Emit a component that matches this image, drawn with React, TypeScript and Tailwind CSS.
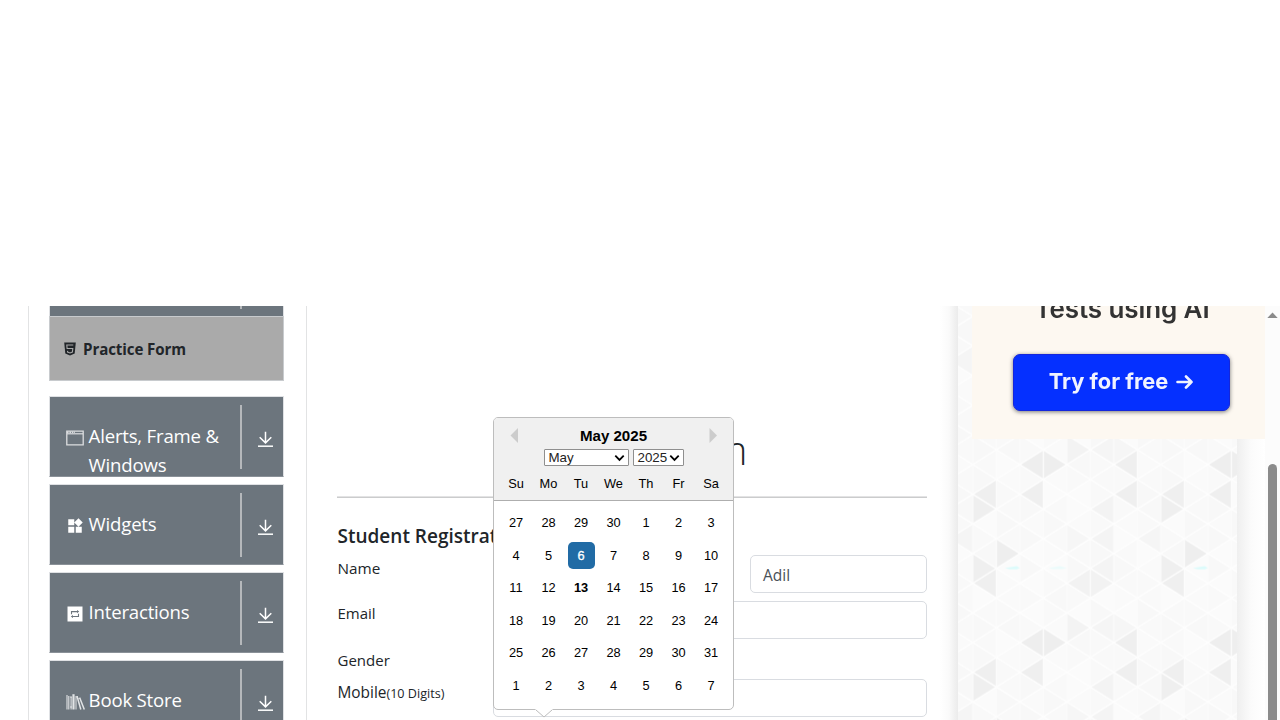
import type { ReactNode } from "react";
import { MdWidgets } from "react-icons/md";

const sans = "font-['Open_Sans','Noto_Sans',sans-serif]";
const arial = "font-['Liberation_Sans',Arial,sans-serif]";

const COL = 23.5;
const HALF = 178 / 12;

const shades: Record<string, string> = {
  "2L0": "#eeeeee", "3R0": "#eeeeee", "6L0": "#efefef",
  "0L2": "#efefef", "0R3": "#efefef", "2L2": "#efefef", "6L2": "#efefef",
  "5L3": "#f3f3f3", "4R11": "#f3f3f3", "5L11": "#f5f5f5", "6R11": "#f6f6f6",
  "4R5": "#f6f6f6", "5L5": "#f4f4f4", "7L5": "#f5f5f5",
  "1R6": "#eeeeee", "0R7": "#efefef", "0L8": "#efefef",
  "4L8": "#f2f2f2", "5R8": "#f2f2f2", "5L7": "#f4f4f4",
};
const tints = ["#f9f9f9", "#fafafa", "#f8f8f8", "#fbfbfb", "#f9f9f9"];

function Triangles() {
  const items: ReactNode[] = [];
  for (let c = 0; c < 8; c++) {
    for (let v = -1; v <= 13; v++) {
      const row = (v + 12) % 12;
      const pointsLeft = (c + v + 12) % 2 === 0;
      const y = v * HALF;
      const apexX = pointsLeft ? c * COL : (c + 1) * COL;
      const baseX = pointsLeft ? (c + 1) * COL : c * COL;
      const fill = shades[`${c}${pointsLeft ? "L" : "R"}${row}`] ?? tints[(c * 3 + row * 2 + ((c * row) % 3)) % 5];
      items.push(
        <polygon
          key={`${c}-${v}`}
          points={`${apexX},${y} ${baseX},${y - HALF} ${baseX},${y + HALF}`}
          fill={fill}
        />,
      );
    }
  }
  for (let c = 0; c <= 8; c++) {
    items.push(<path key={`line-${c}`} d={`M${c * COL} 0V178`} stroke="#fcfcfc" strokeWidth="1.3" />);
  }
  for (let v = -8; v <= 20; v += 2) {
    items.push(
      <path
        key={`diagonal-${v}`}
        d={`M0 ${v * HALF}L188 ${(v + 8) * HALF}M0 ${v * HALF}L188 ${(v - 8) * HALF}`}
        stroke="#fefefe"
        strokeWidth="1.3"
      />,
    );
  }
  return (
    <svg className="block h-[414px] w-[279px]" viewBox="0 0 279 414">
      <defs>
        <pattern id="tri" width="188" height="178" patternUnits="userSpaceOnUse" patternTransform="translate(14.8 158.6)">
          {items}
          <path d="M32 103.5l12-2 3 2-3 1.2h-7z" fill="#dcfbfb" />
          <path d="M76 103.5l11-2 7 2-5 1h-9z" fill="#ebfbfb" />
        </pattern>
      </defs>
      <rect width="279" height="414" fill="url(#tri)" />
    </svg>
  );
}

const BrowserIcon = () => (
  <svg width="18" height="18" viewBox="0 0 18 18" fill="none" stroke="#dcdee0">
    <path d="M.8 2.2h16.4v13.6H.8z" strokeWidth="1.3" />
    <path d="M1 4.8h16" strokeWidth="1.2" />
    <path d="M1 3.3h8" strokeWidth="1.4" strokeDasharray="1.6 .8" />
  </svg>
);

const RepeatIcon = () => (
  <svg width="18" height="18" viewBox="0 0 18 18" fill="none">
    <path fill="#fff" d="M1.5 1.5h15v15h-15z" />
    <path d="M5.5 9.3V6.6h5.7M12.5 8.7v2.8H6.8" stroke="#6c757d" strokeWidth="1.1" />
    <path fill="#6c757d" d="M11 5l2.2 1.6L11 8.2zM7 9.9l-2.2 1.6L7 13.1z" />
  </svg>
);

const BooksIcon = () => (
  <svg width="20" height="18" viewBox="0 0 20 18" fill="none" stroke="#e2e4e6">
    <path d="M1 2v14.5M2.8 3v13.5M5.1 4v12.5" strokeWidth="1.1" />
    <path d="M7.5 1.2v15.3" strokeWidth="2.2" />
    <path d="M10 3v13.5" strokeWidth="1" />
    <path d="M11.2 3.7l3.6 12.8M13.8 5l4.5 11.5" strokeWidth="1.5" />
    <path d="M4 4h2M4 14h2M10 4l2-.6M12.5 5.5l1.8-.6" />
  </svg>
);

const Html5Icon = () => (
  <svg width="12" height="14" viewBox="0 0 12 14">
    <path fill="#212529" d="M.2.4h11.6l-1.1 11L6 13.4l-4.7-2z" />
    <path d="M9.3 3H2.8l.3 3.5h5.7l-.4 3.6L6 11l-2.4-.9-.1-1.2" fill="none" stroke="#aaa" strokeWidth="1.1" />
  </svg>
);

const DownIcon = () => (
  <svg width="16" height="17" viewBox="0 0 16 17" fill="none" stroke="#fff">
    <path d="M8.5 .8v11M2.7 6.2l5.8 5.7 5.8-5.7" strokeWidth="1.5" />
    <path d="M1 15.2h15" strokeWidth="1.5" />
  </svg>
);

function MenuItem({ icon, children }: { icon: ReactNode; children: ReactNode }) {
  return (
    <div className="mb-[7px] flex h-[81px] shrink-0 overflow-hidden border border-t-[#dfe1e4] border-x-[#dfe1e4] border-b-[#8a9198] bg-[#6c757d] text-white">
      <div className="flex w-[190px] shrink-0 pl-4 pt-6 text-[18.6px] leading-[29px] tracking-[-0.2px]">
        <span className="mr-[2.6px] mt-[8px] flex h-[18px] w-5 shrink-0 items-center">{icon}</span>
        <span>{children}</span>
      </div>
      <div className="mt-[8px] h-16 w-[2px] shrink-0 bg-[#b5b8bb]" />
      <div className="pl-[15px] pt-[34px]"><DownIcon /></div>
    </div>
  );
}

const weekdays = ["Su", "Mo", "Tu", "We", "Th", "Fr", "Sa"];
const days = [27, 28, 29, 30, ...Array.from({ length: 31 }, (_, i) => i + 1), 1, 2, 3, 4, 5, 6, 7];

function Select({ label, className }: { label: string; className: string }) {
  return (
    <div className={`flex h-[17px] items-center justify-between rounded-[1px] border border-[#8f8f8f] bg-white pl-1 pr-[3px] text-[13.33px] leading-[15px] text-[#222] ${className}`}>
      <span>{label}</span>
      <svg width="11" height="8" viewBox="0 0 11 8" fill="none" stroke="#000" strokeWidth="1.8">
        <path d="M1.3 1.7L5.5 5.9 9.7 1.7" />
      </svg>
    </div>
  );
}

function DatePicker() {
  return (
    <div className={`absolute left-[186px] top-[111px] h-[293px] w-[241px] rounded-[5px] border border-[#bdbdbd] bg-white text-black ${arial}`}>
      <div className="relative h-[83px] rounded-t-[4px] border-b border-[#aeaeae] bg-[#f0f0f0] pt-2">
        <svg className="absolute left-[16px] top-[10px]" width="9" height="15" viewBox="0 0 9 15"><path d="M8 0v15L.5 7.5z" fill="#ccc" /></svg>
        <svg className="absolute right-[15px] top-[10px]" width="9" height="15" viewBox="0 0 9 15"><path d="M.5 0v15L8 7.5z" fill="#ccc" /></svg>
        <div className="text-center text-[15.1px] font-bold leading-5">May 2025</div>
        <div className="mt-[3px] flex justify-center gap-1">
          <Select label="May" className="w-[85px]" />
          <Select label="2025" className="w-[51px]" />
        </div>
        <div className="mt-[7px] flex justify-center">
          {weekdays.map((d) => <div key={d} className="w-[32.5px] text-center text-[12.8px] leading-[21px]">{d}</div>)}
        </div>
      </div>
      <div className="grid grid-cols-[repeat(7,32.5px)] justify-center pt-[5.6px]">
        {days.map((d, i) => (
          <div key={i} className="flex h-[32.5px] items-center justify-center text-[12.8px]">
            <span className={i === 9 ? "flex h-[27px] w-[27px] items-center justify-center rounded-[5px] bg-[#216ba5] text-white [-webkit-text-stroke:0.3px_white]" : i === 16 ? "font-bold" : ""}>{d}</span>
          </div>
        ))}
      </div>
      <svg className="absolute left-[41px] top-[291px]" width="18" height="9" viewBox="0 0 18 9">
        <path d="M0 0l9 8 9-8" fill="#fff" />
        <path d="M1 1l8 7 8-7" fill="none" stroke="#bdbdbd" />
      </svg>
    </div>
  );
}

const field = "flex h-[38px] items-center rounded-[5px] border border-[#d9dce1] bg-white";

export default function App() {
  return (
    <div className={`flex h-[720px] w-[1280px] flex-col overflow-hidden bg-white text-[#212529] ${sans}`}>
      <div className="h-[306px] shrink-0" />
      <div className="flex h-[414px] overflow-hidden">
        <aside className="ml-7 flex w-[279px] shrink-0 flex-col border-x border-[#e2e3e4] pl-5 pr-[22px]">
          <div className="flex h-[10px] shrink-0 border-x border-[#dfe1e4] bg-[#6c757d] pl-[190px]">
            <div className="h-[3px] w-[2px] bg-[#b5b8bb]" />
          </div>
          <div className="mb-[15px] flex h-[65px] shrink-0 items-center border border-[#c8cbce] bg-[#aaa] pl-[14px] text-[15.1px] font-bold tracking-[-0.1px]">
            <Html5Icon />
            <span className="ml-[7px] mt-px">Practice Form</span>
          </div>
          <MenuItem icon={<BrowserIcon />}>Alerts, Frame &amp; Windows</MenuItem>
          <MenuItem icon={<MdWidgets size={18} />}>Widgets</MenuItem>
          <MenuItem icon={<RepeatIcon />}>Interactions</MenuItem>
          <MenuItem icon={<BooksIcon />}>Book Store Application</MenuItem>
        </aside>

        <main className="relative w-[633px] shrink-0 pl-[30px]">
          <div className="w-[590px]">
            <h1 className="mt-[119px] h-[71px] text-center text-[40px] font-light leading-[50px] tracking-[-1.5px]">Practice Form</h1>
            <div className="h-[2px] border-b border-t border-b-[#cbcccd] border-t-[#e3e3e4]" />
            <h5 className="mt-[26px] pl-[0.5px] text-[19px] font-semibold leading-6">Student Registration Form</h5>
            <div className="mt-[7px] flex text-[15px] leading-6">
              <div className="w-[155.6px] shrink-0 pl-[0.5px] pt-[1px] text-[15.3px]">Name</div>
              <div className={`${field} w-[178px]`} />
              <div className={`${field} ml-auto w-[177px] pl-3 pt-[2px] text-[15.5px] text-[#495057]`}>Adil</div>
            </div>
            <div className="mt-2 flex text-[15px] leading-6">
              <div className="w-[155.6px] pl-[0.5px]">Email</div>
              <div className={`${field} flex-1`} />
            </div>
            <div className="mt-[9px] h-[31px] pl-[0.5px] text-[15px] leading-6">Gender</div>
            <div className="flex text-[15px] leading-6">
              <div className="w-[155.6px] pl-[0.5px] pt-[1px]"><span className="text-[15.4px]">Mobile</span><span className="text-[12.6px]">(10 Digits)</span></div>
              <div className={`${field} flex-1`} />
            </div>
          </div>
          <DatePicker />
        </main>

        <div className="w-[18px] shrink-0 bg-linear-to-r from-white via-[#fafafa] to-[#ebebeb]" />
        <section className="relative flex w-[307px] shrink-0">
          <Triangles />
          <div className="w-7 bg-linear-to-r from-[#efefef] via-[#fbfbfb] to-white" />
          <div className="absolute left-[14px] top-0 flex h-[133px] w-[293px] flex-col items-center overflow-hidden bg-[#fdf8f1] font-['Inter',sans-serif]">
            <div className="-mt-[13px] ml-[7px] h-[61px] text-[26px] font-semibold leading-[32px] tracking-[-0.1px] text-[#333] blur-[0.5px]">Tests using AI</div>
            <div className="ml-[5px] flex h-[57px] w-[217px] items-center justify-center rounded-[7px] border border-[#1426dc] bg-[#0530ff] pb-[3px] text-[21.8px] font-bold text-[#f0f3ff] shadow-[0_1px_4px_#777] blur-[0.5px]">
              Try for free
              <svg className="ml-2 mt-[2px]" width="17" height="16" viewBox="0 0 17 16" fill="none" stroke="#f0f3ff" strokeWidth="2.6" strokeLinecap="round" strokeLinejoin="round"><path d="M1.5 8H15.5M10 2.5L15.5 8l-5.5 5.5" /></svg>
            </div>
          </div>
        </section>
        <div className="flex w-[15px] shrink-0 flex-col items-center bg-[#fcfcfc]">
          <svg className="mt-[6px] shrink-0" width="11" height="7" viewBox="0 0 11 7"><path d="M5.5.5L10.7 6H.3z" fill="#8b8b8b" /></svg>
          <div className="mt-[145px] h-[256px] w-[9px] rounded-t-full bg-[#8b8b8b]" />
        </div>
      </div>
    </div>
  );
}
